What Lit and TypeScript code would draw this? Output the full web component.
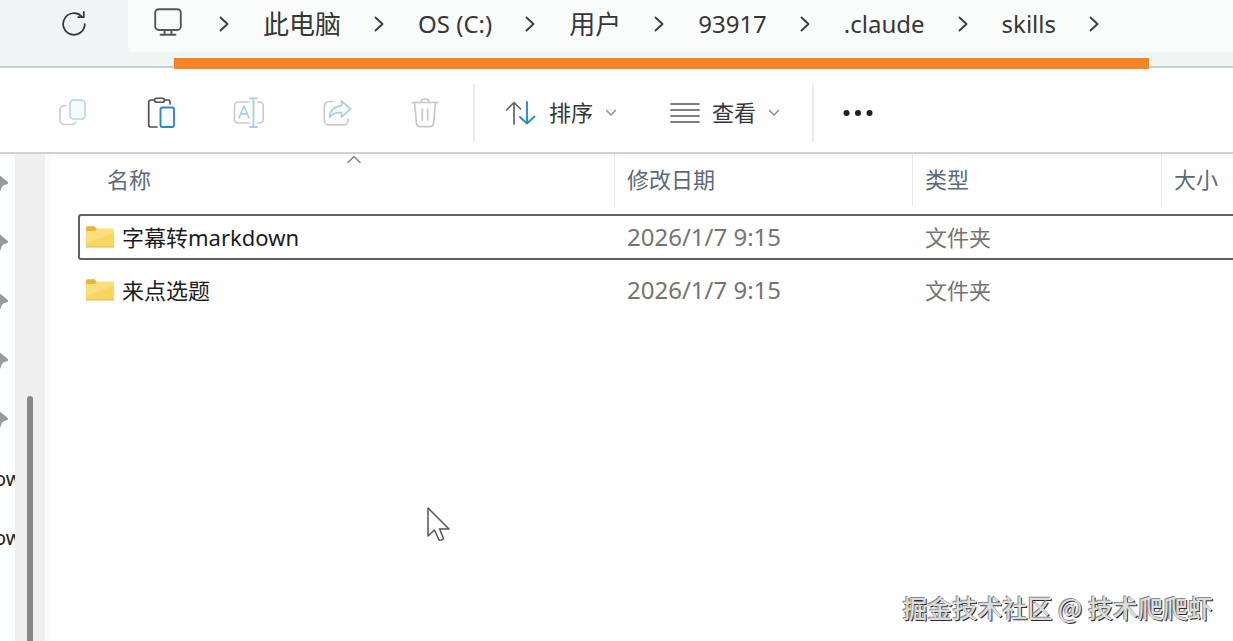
import { LitElement, html, css, svg, nothing } from "lit";
import { customElement, property } from "lit/decorators.js";

const crumbs = ["此电脑", "OS (C:)", "用户", "93917", ".claude", "skills"];

const files = [
  { name: "字幕转markdown", date: "2026/1/7 9:15", type: "文件夹", selected: true },
  { name: "来点选题", date: "2026/1/7 9:15", type: "文件夹", selected: false },
];

const icon = (w: number, h: number, body: unknown) => html`<svg
  width=${w} height=${h} viewBox="0 0 ${w} ${h}" fill="none"
  stroke-linecap="round" stroke-linejoin="round" aria-hidden="true">${body}</svg>`;

const chevronRight = icon(12, 16, svg`<path d="M2.500 1.500l7 6.500-7 6.500" stroke="#3c3c3c" stroke-width="1.900"/>`);
const chevronDown = icon(12, 8, svg`<path d="M1.500 1.500L6 6l4.500-4.500" stroke="#8a8a8a" stroke-width="1.400"/>`);
const chevronUp = icon(16, 10, svg`<path d="M2 8.500l6-6 6 6" stroke="#7d8387" stroke-width="1.500"/>`);

const refreshIcon = icon(26, 26, svg`
  <path d="M20.600 6.300A10.800 10.800 0 1 0 23.800 14" stroke="#333" stroke-width="1.700"/>
  <path d="M22.800 1.800v5.400h-5.600" stroke="#333" stroke-width="1.700"/>`);
const monitorIcon = icon(28, 30, svg`
  <rect x="1.200" y="2.200" width="25.600" height="20.800" rx="3.600" stroke="#555" stroke-width="1.900"/>
  <path d="M10.500 23.500v3.800M17.500 23.500v3.800M6.500 27.800h15" stroke="#555" stroke-width="1.900"/>`);

const copyIcon = icon(30, 30, svg`
  <rect x="12" y="2" width="15" height="19" rx="3.500" fill="#f6fbfe" stroke="#b5d5e6" stroke-width="1.600"/>
  <path d="M8 7.500C4.500 7.500 2 9 2 11.500v10C2 24.500 4 26.500 7 26.500h6.500c2.200 0 3.500-.8 4.200-2.500" stroke="#cacdcf" stroke-width="1.600"/>`);
const pasteIcon = icon(30, 32, svg`
  <path d="M8 3H5c-1.300 0-2.300 1-2.300 2.300v22.400c0 1.300 1 2.300 2.300 2.300h6" stroke="#505050" stroke-width="1.700"/>
  <path d="M18.500 3H22c1.300 0 2 .8 2 2.100v1.900" stroke="#505050" stroke-width="1.700"/>
  <rect x="8.500" y="1.300" width="10" height="4" rx="2" stroke="#505050" stroke-width="1.600"/>
  <rect x="14.500" y="10.500" width="13.500" height="19.500" rx="2" fill="#f7fbff" stroke="#2f86c4" stroke-width="1.900"/>`);
const renameIcon = icon(32, 32, svg`
  <path d="M16.500 5H5.500c-2.300 0-4 1.700-4 4v13c0 2.300 1.700 4 4 4h11" stroke="#c9ccce" stroke-width="1.600"/>
  <path d="M24.500 5h1.700c2.300 0 4 1.700 4 4v13c0 2.300-1.700 4-4 4h-1.700" stroke="#c9ccce" stroke-width="1.600"/>
  <path d="M6 21l5-12 5 12M7.800 17h6.400" stroke="#b3d1e2" stroke-width="1.800"/>
  <path d="M20.500 1.300v28.700M17 1.300h7M17 30h7" stroke="#a9cfe4" stroke-width="1.800"/>`);
const shareIcon = icon(30, 30, svg`
  <path d="M11 3.500H7C4.300 3.500 2.300 5.500 2.300 8.200v14c0 2.700 2 4.700 4.700 4.700h14.300c2.700 0 4.700-2 4.700-4.700v-1.500" stroke="#c9ccce" stroke-width="1.700"/>
  <path d="M19.500 2.800l9 8.200-9 8.200v-4.600c-5.500-.2-9.500 1.200-12 4.800.4-7 4.800-11 12-11.800z" fill="#f4fafd" stroke="#afd0e1" stroke-width="1.700"/>`);
const trashIcon = icon(30, 32, svg`
  <path d="M2 5.500h26M11 5c0-2 1.500-3 4-3s4 1 4 3M4.500 6l2 20.500c.2 2 1.500 3.200 3.500 3.200h10c2 0 3.300-1.200 3.500-3.200L25.500 6M12.300 12v11M17.700 12v11" stroke="#c6c8c9" stroke-width="1.700"/>`);
const sortIcon = icon(32, 26, svg`
  <path d="M9 24V2.500M1.500 10L9 2.500 15.500 9" stroke="#666" stroke-width="1.700"/>
  <path d="M22 2v21.500M15 17l7 6.500 7.500-7" stroke="#2a8cc2" stroke-width="1.900"/>`);
const viewIcon = icon(30, 22, svg`
  <path d="M1 2h28M1 8h28M1 14h28M1 20h28" stroke="#555" stroke-width="1.700"/>`);
const moreIcon = icon(30, 8, svg`
  <g fill="#1f1f1f"><circle cx="3.500" cy="4" r="3"/><circle cx="15" cy="4" r="3"/><circle cx="26.500" cy="4" r="3"/></g>`);
const folderIcon = icon(28, 24, svg`
  <path d="M0 3.500C0 2 .6 1.200 1.500 1.200h7L11 4v4H0z" fill="#e6b73a"/>
  <path d="M0 6h9l2-2.500h16a1 1 0 0 1 1 1V21a1 1 0 0 1-1 1H1a1 1 0 0 1-1-1z" fill="#fadf7c"/>
  <path d="M28 8v13a1 1 0 0 1-1 1H1a1 1 0 0 1-1-1v-3z" fill="#f8d65f"/>
  <path d="M.5 22h27" stroke="#d9b65a" stroke-width="1"/>`);
const pinIcon = icon(9, 20, svg`
  <path d="M0 1.500C2 3.500 5 5.500 8 8.200c.4 1.400-.5 2-2 2.300-2.500.5-4 1.500-4.500 3.500L0 18z" fill="#979b9e"/>`);

@customElement("path-bar")
class PathBar extends LitElement {
  static styles = css`
    :host { display: flex; align-items: flex-start; height: 66px; background: #f0f5f6; border-bottom: 2px solid #c3cfd2; }
    button, a { font: inherit; color: inherit; border: 0; background: none; padding: 0; text-decoration: none; }
    svg { display: block; flex: none; }
    .refresh { flex: none; width: 48px; height: 46px; margin: 0 30px 0 50px; display: flex; align-items: center; justify-content: center; }
    .field { flex: 1; min-width: 0; height: 52px; box-sizing: border-box; padding: 0 26px 4px; border-radius: 0 0 0 5px;
      background: #fafcfc; display: flex; align-items: center; }
    .device { padding-bottom: 4px; }
    ol { list-style: none; display: flex; align-items: center; gap: 33px; margin: 0; padding: 0 0 0 36px; }
    li { display: flex; align-items: center; gap: 32px; white-space: nowrap; }
    .cjk { font-size: 26px; line-height: 36px; }
    .latin { font-size: 24px; line-height: 36px; }
  `;
  render() {
    return html`
      <button class="refresh" aria-label="刷新">${refreshIcon}</button>
      <nav class="field" aria-label="路径">
        <span class="device">${monitorIcon}</span>
        <ol>
          <li>${chevronRight}</li>
          ${crumbs.map((c) => html`<li>
            <a href="#" class=${/^[\x00-\x7f]+$/.test(c) ? "latin" : "cjk"}>${c}</a>${chevronRight}
          </li>`)}
        </ol>
      </nav>`;
  }
}

@customElement("command-bar")
class CommandBar extends LitElement {
  static styles = css`
    :host { display: flex; align-items: center; height: 78px; padding: 6px 0 0 29px; background: #fefefe; border-bottom: 2px solid #cbd3d5; }
    button { font: inherit; color: inherit; border: 0; background: none; padding: 0; flex: none; display: flex; align-items: center; }
    svg { display: block; flex: none; }
    .tool { width: 88px; height: 58px; justify-content: center; }
    .menu { gap: 12px; height: 58px; font-size: 22px; line-height: 32px; }
    .menu span { padding-bottom: 2px; }
    .menus { display: flex; gap: 53px; padding: 0 32px 0 30px; }
    .rule { width: 2px; height: 58px; background: #ebebeb; }
    .tools { display: flex; padding-right: 4px; }
    .more { height: 58px; padding-left: 29px; }
  `;
  render() {
    const tools: [string, unknown, boolean][] = [
      ["复制", copyIcon, true], ["粘贴", pasteIcon, false], ["重命名", renameIcon, true],
      ["共享", shareIcon, true], ["删除", trashIcon, true],
    ];
    return html`
      <div class="tools">${tools.map(([label, glyph, off]) => html`
        <button class="tool" aria-label=${label} ?disabled=${off}>${glyph}</button>`)}</div>
      <span class="rule"></span>
      <div class="menus">
        <button class="menu">${sortIcon}<span>排序</span>${chevronDown}</button>
        <button class="menu">${viewIcon}<span>查看</span>${chevronDown}</button>
      </div>
      <span class="rule"></span>
      <button class="more" aria-label="更多">${moreIcon}</button>`;
  }
}

@customElement("side-pane")
class SidePane extends LitElement {
  static styles = css`
    :host { display: flex; flex: none; min-height: 0; overflow: hidden; }
    ul { list-style: none; width: 15px; margin: 0; padding: 0; overflow: hidden; background: #fdfefe; }
    li { height: 59px; display: flex; align-items: center; font-size: 20px; line-height: 28px; color: #222; }
    .label { margin-left: -6px; }
    .track { width: 30px; background: #efefef; border-right: 5px solid #fafafa; display: flex; justify-content: center; }
    .thumb { width: 6px; margin-top: 242px; border-radius: 3px 3px 0 0; background: #878787; }
  `;
  render() {
    return html`
      <ul>
        ${[1, 2, 3, 4, 5].map(() => html`<li>${pinIcon}</li>`)}
        ${[1, 2].map(() => html`<li><span class="label">ow</span></li>`)}
      </ul>
      <div class="track"><div class="thumb"></div></div>`;
  }
}

@customElement("file-list")
class FileList extends LitElement {
  @property({ attribute: false }) rows = files;
  static styles = css`
    :host { display: block; flex: 1; min-width: 0; padding-left: 28px; background: #fefefe; }
    table { width: 100%; table-layout: fixed; border-collapse: collapse; font-size: 22px; line-height: 32px; }
    .c-date { width: 298px; }
    .c-type { width: 249px; }
    .c-size { width: 71px; }
    th, td { padding: 0; text-align: left; font-weight: 400; white-space: nowrap; overflow: hidden; }
    th { height: 60px; vertical-align: top; }
    td { height: 53px; vertical-align: top; }
    .head { position: relative; height: 52px; box-sizing: border-box; display: flex; align-items: center;
      padding: 0 0 2px 12px; border-right: 1px solid #e6eaea; }
    .head.name { padding-left: 29px; }
    .head.last { border-right: 0; }
    .head button { font: inherit; color: #5c6a78; border: 0; background: none; padding: 0; }
    .sort { position: absolute; top: 0; left: 50%; }
    svg { display: block; flex: none; }
    .cell { height: 46px; box-sizing: border-box; display: flex; align-items: center; padding-left: 12px;
      border: 2px solid transparent; border-width: 2px 0; color: #78736f; }
    .cell.name { gap: 8px; padding-left: 6px; border-left-width: 2px; border-radius: 3px 0 0 3px; color: #1c1c1c; }
    .selected .cell { border-color: #606060; }
    .date { font-size: 24px; }
  `;
  render() {
    return html`<table>
      <colgroup><col /><col class="c-date" /><col class="c-type" /><col class="c-size" /></colgroup>
      <thead><tr>
        <th aria-sort="ascending"><div class="head name"><button>名称</button><span class="sort">${chevronUp}</span></div></th>
        <th><div class="head"><button>修改日期</button></div></th>
        <th><div class="head"><button>类型</button></div></th>
        <th><div class="head last"><button>大小</button></div></th>
      </tr></thead>
      <tbody>${this.rows.map((f) => html`
        <tr class=${f.selected ? "selected" : nothing}>
          <td><div class="cell name">${folderIcon}<span>${f.name}</span></div></td>
          <td><div class="cell date">${f.date}</div></td>
          <td><div class="cell">${f.type}</div></td>
          <td><div class="cell"></div></td>
        </tr>`)}</tbody>
    </table>`;
  }
}

@customElement("app-root")
class AppRoot extends LitElement {
  static styles = css`
    :host { position: relative; display: flex; flex-direction: column; height: 100vh; overflow: hidden; background: #fefefe;
      color: #363636; font-family: "Noto Sans", "Noto Sans CJK SC", sans-serif; }
    .body { flex: 1; min-height: 0; display: flex; }
    .marker { position: absolute; top: 58px; left: 174px; right: 84px; height: 11px; background: #f48525; }
    .pointer { position: absolute; left: 426px; top: 506px; }
    .credit { position: absolute; right: 20px; bottom: 16px; font-size: 25px; line-height: 36px; white-space: nowrap;
      font-family: "Noto Sans CJK SC", sans-serif; font-weight: 500; color: #dcdcdc;
      text-shadow: -1px -1px 0 #8a8a8a, 1px 1px 0 #2e2e2e; }
  `;
  render() {
    return html`
      <path-bar></path-bar>
      <command-bar></command-bar>
      <div class="body"><side-pane></side-pane><file-list></file-list></div>
      <div class="marker"></div>
      <div class="pointer">${icon(26, 38, svg`
        <path d="M2 2v28l6.500-6 4.500 10c1.500.6 4-.4 4.500-1.800L13.500 23H23z" fill="#fff" stroke="#555" stroke-width="1.500"/>`)}</div>
      <div class="credit">掘金技术社区 @ 技术爬爬虾</div>`;
  }
}
